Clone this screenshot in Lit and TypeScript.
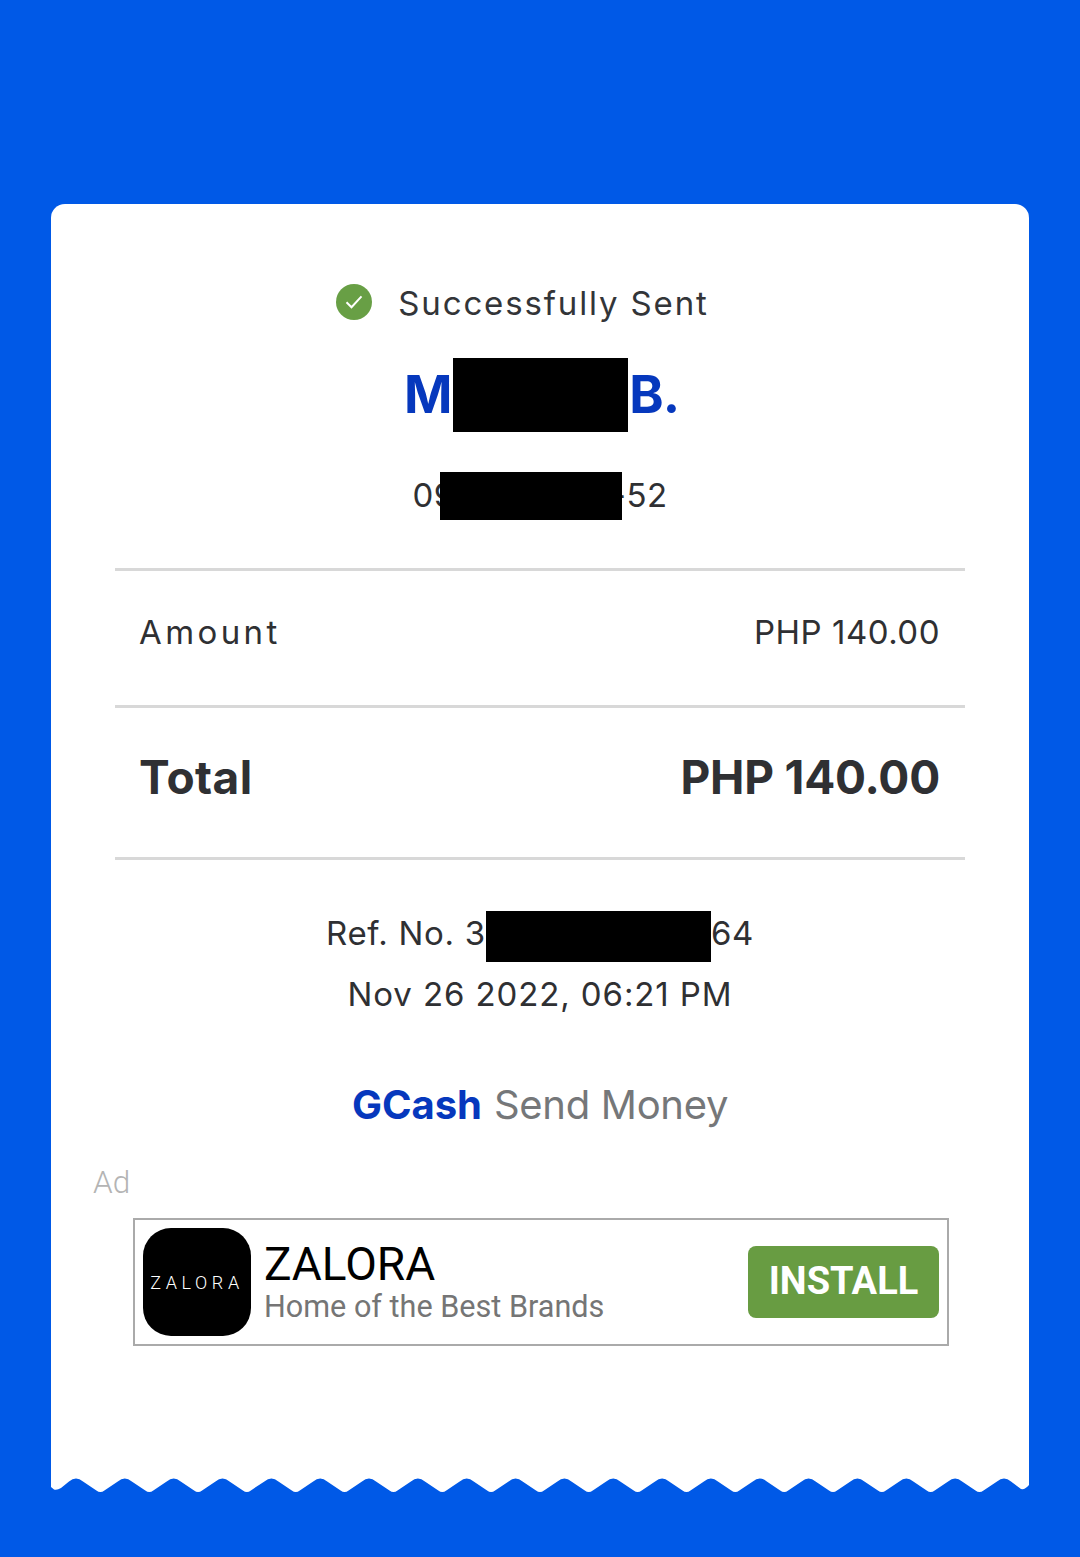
import { LitElement, html, css, svg } from "lit";
import { customElement } from "lit/decorators.js";

function wavePath(): string {
  const w = 978, p = 48.84, top = 0, bot = 16, start = 25;
  let d = `M0 0 L${w} 0 L${w} 8 Q${w - 4} 13 ${w - 8} 12 `;
  const pts: number[] = [];
  for (let i = 0; i < 20; i++) pts.push(start + i * p);
  pts.reverse();
  pts.forEach((x, i) => {
    d += `L${(x + 7).toFixed(1)} ${top + 4.5} Q${x.toFixed(1)} ${top - 1.5} ${(x - 7).toFixed(1)} ${top + 4.5} `;
    if (i < pts.length - 1) {
      const v = x - p / 2;
      d += `L${(v + 4).toFixed(1)} ${bot - 2.6} Q${v.toFixed(1)} ${bot + 0.6} ${(v - 4).toFixed(1)} ${bot - 2.6} `;
    }
  });
  d += `L10 11 Q6 13.5 3 12.5 L0 10 Z`;
  return d;
}

@customElement("app-root")
export class AppRoot extends LitElement {
  static styles = css`
    :host { display: block; }
    .page {
      width: 1080px; height: 1557px; box-sizing: border-box; background: #0059e7;
      padding: 204px 51px 0;
      font-family: Inter, "Liberation Sans", sans-serif; color: #2f3033;
    }
    .card { width: 978px; background: #fff; border-radius: 14px 14px 0 0; height: 1273px; display: flex; flex-direction: column; align-items: center; box-sizing: border-box; padding-top: 79px; }
    .wave { display: block; width: 978px; height: 17px; }
    .status { display: flex; align-items: center; height: 40px; font-size: 33px; letter-spacing: 1.85px; gap: 26px; color: #333538; margin-right: 35px; }
    .status svg { width: 36px; height: 36px; display: block; margin-top: -3px; }
    .name { display: flex; align-items: center; height: 74px; margin-top: 35px; font-size: 52px; font-weight: 700; color: #0638bd; letter-spacing: -1px; padding-left: 3px; }
    .name span:not(.box) { margin-top: -2px; }
    .box { background: #000; display: block; flex: none; position: relative; z-index: 1; }
    .name .box { width: 175px; height: 74px; margin: 0 1px 0 2px; }
    .phone { display: flex; align-items: center; height: 48px; margin-top: 40px; font-size: 33px; letter-spacing: 0.5px; }
    .phone span:not(.box) { margin-top: -2px; }
    .phone .box { width: 182px; height: 48px; margin: 0 -11px 0 -15px; }
    .rule { width: 850px; height: 3px; background: #d8d8d8; flex: none; }
    .r1 { margin-top: 48px; }
    .row { width: 800px; display: flex; justify-content: space-between; align-items: center; box-sizing: border-box; padding-bottom: 12px; }
    .row .l { margin-left: -1px; }
    .amount { height: 134px; font-size: 33px; letter-spacing: 0.5px; }
    .amount .l { letter-spacing: 3.4px; }
    .total { height: 149px; font-size: 46px; font-weight: 700; letter-spacing: -0.2px; }
    .total .l { letter-spacing: 0.4px; }
    .ref { display: flex; align-items: center; height: 51px; margin-top: 51px; font-size: 33px; letter-spacing: 0.7px; white-space: nowrap; }
    .ref span:not(.box) { padding-bottom: 7px; }
    .ref .box { width: 225px; height: 51px; }
    .date { margin-top: 8px; height: 48px; line-height: 48px; font-size: 33px; letter-spacing: 0.9px; }
    .brand { margin-top: 62px; height: 50px; line-height: 50px; font-size: 40px; color: #757779; letter-spacing: -0.3px; }
    .brand b { color: #0638bd; font-weight: 700; margin-right: 1px; letter-spacing: 0; }
    .adlabel { align-self: flex-start; margin: 35px 0 0 42px; height: 36px; line-height: 36px; font-family: Roboto, sans-serif; font-weight: 300; font-size: 31.5px; color: #b4b4b4; }
    .ad { margin: 17px 0 0 2px; width: 816px; height: 128px; box-sizing: border-box; border: 2px solid #aaa; display: flex; align-items: center; padding: 0 8px; font-family: Roboto, sans-serif; }
    .logo { width: 108px; height: 108px; border-radius: 28px; background: #000; color: #fff; display: flex; align-items: center; justify-content: center; font-size: 18px; font-weight: 300; letter-spacing: 4.6px; flex: none; }
    .txt { margin-left: 13px; flex: 1; display: flex; flex-direction: column; }
    .t1 { font-size: 46px; line-height: 50px; color: #000; margin-top: -1px; }
    .t2 { font-size: 30.6px; line-height: 36px; color: #757575; }
    .btn { width: 191px; height: 72px; background: #689c42; border-radius: 8px; color: #fff; font-weight: 700; font-size: 38px; display: flex; align-items: center; justify-content: center; box-sizing: border-box; padding-bottom: 2px; }
  `;
  render() {
    return html`<div class="page">
      <div class="card">
        <div class="status">
          <svg viewBox="0 0 36 36"><circle cx="18" cy="18" r="18" fill="#689f45"/><path d="M10.5 18.2l5 5 10-10.8" fill="none" stroke="#fff" stroke-width="2"/></svg>
          <span>Successfully Sent</span>
        </div>
        <div class="name"><span>M</span><span class="box"></span><span>B.</span></div>
        <div class="phone"><span>09</span><span class="box"></span><span>-52</span></div>
        <div class="rule r1"></div>
        <div class="row amount"><span class="l">Amount</span><span>PHP 140.00</span></div>
        <div class="rule"></div>
        <div class="row total"><span class="l">Total</span><span>PHP 140.00</span></div>
        <div class="rule"></div>
        <div class="ref"><span>Ref. No. 3</span><span class="box"></span><span>64</span></div>
        <div class="date">Nov 26 2022, 06:21 PM</div>
        <div class="brand"><b>GCash</b> Send Money</div>
        <div class="adlabel">Ad</div>
        <div class="ad">
          <div class="logo">ZALORA</div>
          <div class="txt"><div class="t1">ZALORA</div><div class="t2">Home of the Best Brands</div></div>
          <div class="btn">INSTALL</div>
        </div>
      </div>
      <svg class="wave" viewBox="0 0 978 17">${svg`<path d=${wavePath()} fill="#fff"/>`}</svg>
    </div>`;
  }
}
